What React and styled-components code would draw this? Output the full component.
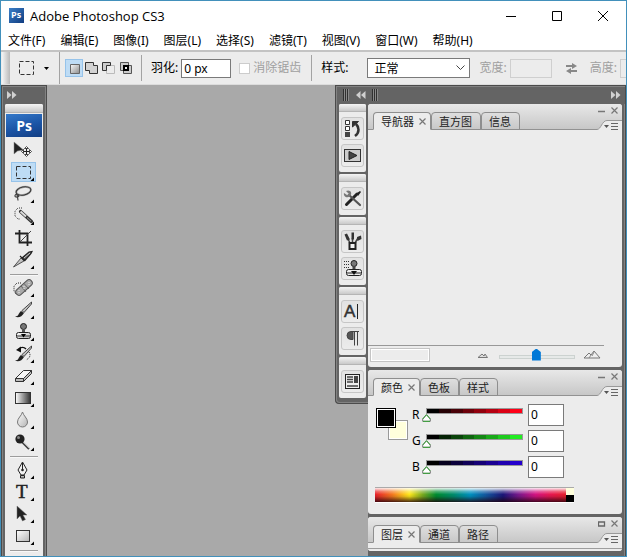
import React, { useState } from "react";
import styled, { createGlobalStyle, css } from "styled-components";

const Global = createGlobalStyle`
  * { box-sizing: border-box; }
  body { margin: 0; background: #fff; overflow: hidden; }
  button, input, select { font: inherit; margin: 0; }
  button { padding: 0; border: 0; background: none; color: inherit; }
`;

const uiFont = `"Noto Sans", "Noto Sans CJK SC", sans-serif`;

const Window = styled.div`
  display: flex;
  flex-direction: column;
  height: 100vh;
  overflow: hidden;
  border: 1px solid #4290bb;
  background: #fff;
  color: #000;
  font: 12px/16px ${uiFont};
  svg { display: block; flex: none; }
`;

/* ---------- title and menu ---------- */
const TitleBar = styled.header`
  display: flex;
  align-items: center;
  flex: none;
  height: 29px;
  padding: 0 0 0 8px;
`;
const Title = styled.h1`
  flex: 1;
  margin: 0 0 0 6px;
  font: 400 13px/18px "Open Sans", sans-serif;
  white-space: nowrap;
`;
const CaptionButton = styled.button`
  display: grid;
  place-items: center;
  width: 46px;
  height: 28px;
`;
const MenuBar = styled.nav`
  display: flex;
  flex: none;
  gap: 15px;
  height: 20px;
  padding: 2px 7px 0;
`;
const MenuItem = styled.button`
  white-space: nowrap;
  height: 18px;
  line-height: 18px;
`;

/* ---------- options bar ---------- */
const OptionsBar = styled.section`
  display: flex;
  align-items: center;
  flex: none;
  height: 35px;
  overflow: hidden;
  border-top: 2px solid #c3c3c3;
  border-bottom: 1px solid #dcdcdc;
  background: #ececec;
  white-space: nowrap;
`;
const OptionsGrip = styled.div`
  flex: none;
  width: 8px;
  height: 32px;
  margin-left: 1px;
  background: linear-gradient(90deg, #f4f4f4, #b9b9b9);
`;
const PresetButton = styled.button`
  display: flex;
  flex: none;
  align-items: center;
  gap: 9px;
  margin: 0 10px 0 9px;
`;
const Divider = styled.div`
  flex: none;
  width: 1px;
  height: ${(p) => p.$h || 26}px;
  background: #a3a3a3;
`;
const ModeGroup = styled.div`
  display: flex;
  flex: none;
  margin: 0 7px 0 5px;
`;
const ModeButton = styled.button`
  display: grid;
  place-items: center;
  width: ${(p) => (p.$on ? 18 : 17)}px;
  height: 18px;
  ${(p) => p.$on && css`background: #bedcf5; box-shadow: inset 0 0 0 1px #96c3ea;`}
`;
const FieldLabel = styled.label`
  flex: none;
  margin-left: 9px;
  color: ${(p) => (p.$dim ? "#a0a0a0" : "#000")};
`;
const TextField = styled.input`
  flex: none;
  width: ${(p) => p.$w}px;
  height: 19px;
  margin-left: 3px;
  padding: 0 2px;
  border: 1px solid #7a7a7a;
  border-radius: 0;
  background: #fff;
  outline: 0;
  &:disabled { border-color: #cfcfcf; background: #ececec; }
`;
const CheckLabel = styled.label`
  display: flex;
  flex: none;
  align-items: center;
  gap: 3px;
  margin: 0 10px 0 8px;
  color: #a0a0a0;
`;
const Check = styled.input`
  appearance: none;
  width: 11px;
  height: 11px;
  border: 1px solid #ccc;
  background: #fff;
`;
const SelectWrap = styled.div`
  display: grid;
  flex: none;
  width: 103px;
  margin-left: 19px;
  align-items: center;
  > * { grid-area: 1 / 1; }
  svg { justify-self: end; margin-right: 5px; pointer-events: none; }
`;
const Select = styled.select`
  appearance: none;
  height: 20px;
  padding: 0 20px 0 6px;
  border: 1px solid #7a7a7a;
  border-radius: 0;
  background: #fff;
  color: #000;
  line-height: 17px;
`;
const SwapButton = styled.button`
  flex: none;
  margin: 0 3px 0 13px;
`;

/* ---------- workspace ---------- */
const Workspace = styled.main`
  display: flex;
  flex: 1;
  min-height: 0;
  justify-content: space-between;
  background: #a9a9a9;
`;
const ToolDock = styled.aside`
  flex: none;
  width: 46px;
  padding: 0 3px;
  overflow: hidden;
  background: #646464;
  border: 1px solid #4b4b4b;
  border-bottom: 0;
  box-shadow: inset 1px 1px 0 #828282, inset -1px 0 0 #828282;
`;
const DockHeader = styled.div`
  display: flex;
  align-items: center;
  height: 18px;
  padding-left: 2px;
`;
const ToolPanel = styled.div`
  width: 38px;
  min-height: 460px;
  border-radius: 2px 2px 0 0;
  background: #ececec;
`;
const PanelGrip = styled.div`
  height: ${(p) => p.$h || 8}px;
  border-radius: 2px 2px 0 0;
  border-bottom: 1px solid #b5b5b5;
  background: linear-gradient(#f4f4f4, #c9c9c9);
`;
const PsBadge = styled.div`
  height: 23px;
  margin: 1px 1px 2px;
  background: linear-gradient(165deg, #3479ca, #1b54a5 55%, #123d82);
  color: #fff;
  text-align: center;
  font: 700 14px/23px "Open Sans", sans-serif;
`;
const ToolGroup = styled.div`
  display: flex;
  flex-direction: column;
  align-items: center;
  gap: 2px;
  padding: 1px 2px 1px 0;
`;
const ToolSeparator = styled.hr`
  width: 28px;
  height: 2px;
  margin: 3px auto 1px;
  border: 0;
  border-top: 1px solid #9d9d9d;
  background: #f8f8f8;
`;
const ToolButton = styled.button`
  width: 25px;
  height: 20px;
  ${(p) => p.$on && css`background: #bedcf5; box-shadow: inset 0 0 0 1px #96c3ea;`}
`;

const RightDock = styled.aside`
  display: grid;
  flex: none;
  grid-template-columns: 33px 258px;
  grid-template-rows: 19px 1fr;
`;
const RightHeader = styled.div`
  grid-column: 1 / -1;
  display: flex;
  align-items: center;
  gap: 6px;
  padding: 0 4px 0 7px;
  border: 1px solid #4b4b4b;
  border-bottom: 0;
  background: #646464;
  box-shadow: inset 1px 1px 0 #828282;
`;
const HeaderSpacer = styled.div`flex: 1;`;
const IconColumn = styled.div`
  align-self: start;
  display: flex;
  flex-direction: column;
  gap: 2px;
  padding: 0 2px 5px 3px;
  border: 1px solid #4b4b4b;
  border-width: 0 0 1px 1px;
  border-radius: 0 0 0 4px;
  background: #646464;
  box-shadow: inset 1px -1px 0 #828282;
`;
const IconGroup = styled.div`
  border-radius: 2px;
  background: #ececec;
  padding-bottom: 5px;
`;
const IconStack = styled.div`
  display: flex;
  flex-direction: column;
  align-items: center;
  gap: 4px;
  padding-top: 5px;
`;
const IconButton = styled.button`
  display: grid;
  place-items: center;
  width: 23px;
  height: 23px;
  border: 1px solid #c6c6c6;
  border-radius: 3px;
  background: linear-gradient(#e2e2e2, #ececec);
`;
const PanelColumn = styled.div`
  display: flex;
  flex-direction: column;
  gap: 3px;
  min-height: 0;
  padding: 0 4px 0 0;
  background: #646464;
  box-shadow: inset -1px 0 0 #4b4b4b, inset -2px 0 0 #828282;
`;
const Panel = styled.section`
  flex: none;
  border-radius: 3px;
  overflow: hidden;
  background: #ececec;
`;
const TabRow = styled.div`
  display: flex;
  align-items: flex-end;
  height: 26px;
  padding-left: 5px;
  background: linear-gradient(#e8e8e8, #c6c6c6);
  box-shadow: inset 0 -1px 0 #929292;
`;
const Tab = styled.div`
  display: flex;
  align-items: center;
  gap: 5px;
  height: 18px;
  padding: 0 ${(p) => (p.$on ? 4 : 8)}px 0 7px;
  border: 1px solid #8e8e8e;
  border-radius: 4px 4px 0 0;
  background: linear-gradient(#dedede, #c8c8c8);
  ${(p) => p.$on && css`background: #ececec; border-bottom-color: #ececec;`}
`;
const TabButton = styled.button`
  color: #222;
  font: 11px/15px "Noto Sans CJK SC", sans-serif;
  white-space: nowrap;
`;
const PanelControls = styled.div`
  display: flex;
  flex-direction: column;
  align-items: flex-end;
  align-self: stretch;
  justify-content: space-between;
  margin-left: auto;
`;
const PanelButtons = styled.div`
  display: flex;
  gap: 5px;
  padding: 3px 4px 0 0;
`;

const NavBody = styled.div`
  height: 237px;
  display: flex;
  flex-direction: column;
  justify-content: flex-end;
`;
const NavFooter = styled.div`
  display: flex;
  align-items: center;
  height: 22px;
  padding: 0 21px 3px 2px;
  background: linear-gradient(#989898, #989898) 0 0 / 236px 1px no-repeat;
`;
const ZoomField = styled.input`
  width: 60px;
  height: 14px;
  border: 1px solid #c4c4c4;
  border-radius: 0;
  background: #ececec;
  box-shadow: inset -1px -1px 0 #fff, inset 1px 1px 0 #fff;
`;
const ZoomRange = styled.input`
  appearance: none;
  width: 76px;
  height: 12px;
  margin: 0 8px 0 11px;
  background:
    linear-gradient(#e6e9e8, #e6e9e8) 1px 7px / 74px 2px no-repeat,
    linear-gradient(#ccd2d0, #ccd2d0) 0 6px / 76px 4px no-repeat;
  &::-webkit-slider-thumb {
    appearance: none;
    width: 9px;
    height: 12px;
    background: #0078d7;
    clip-path: polygon(0 30%, 50% 0, 100% 30%, 100% 100%, 0 100%);
  }
`;

const ColorBody = styled.div`
  display: grid;
  grid-template-columns: 32px 1fr;
  column-gap: 4px;
  padding: 8px 48px 11px 8px;
`;
const Swatches = styled.div`
  display: grid;
  width: 32px;
  height: 32px;
  margin-top: 4px;
`;
const Swatch = styled.button`
  grid-area: 1 / 1;
  width: 20px;
  height: 20px;
  border: 1px solid ${(p) => (p.$front ? "#000" : "#999")};
  background: ${(p) => p.$color};
  box-shadow: inset 0 0 0 1px #fff;
  ${(p) => (p.$front ? css`z-index: 1;` : css`place-self: end;`)}
`;
const Channels = styled.div`
  display: flex;
  flex-direction: column;
  gap: 4px;
`;
const Channel = styled.div`
  display: flex;
  align-items: center;
  height: 22px;
`;
const ChannelLabel = styled.label`
  width: 10px;
`;
const thumb = `url("data:image/svg+xml,%3Csvg xmlns='http://www.w3.org/2000/svg' width='9' height='8'%3E%3Cpath d='M4.5 .7L8.3 5v2.3H.7V5z' fill='white' stroke='%23777'/%3E%3Cpath d='M4.5 .7L8.3 5M4.5 .7L.7 5M1 7.3h7' stroke='%2330a030'/%3E%3C/svg%3E")`;
const ChannelRange = styled.input`
  appearance: none;
  width: 105px;
  height: 14px;
  background:
    ${(p) => p.$ramp} 5px 1px / 95px 4px no-repeat,
    linear-gradient(#999, #999) 4px 0 / 97px 6px no-repeat;
  &::-webkit-slider-runnable-track { height: 14px; }
  &::-webkit-slider-thumb {
    appearance: none;
    width: 9px;
    height: 8px;
    margin-top: 6px;
    background: ${thumb};
  }
`;
const ChannelValue = styled.input`
  width: 36px;
  height: 22px;
  margin-left: 1px;
  padding: 0 2px 2px;
  border: 1px solid #7a7a7a;
  border-radius: 0;
  background: #fff;
`;
const Spectrum = styled.div`
  grid-column: 1 / -1;
  display: grid;
  grid-template-columns: 1fr 8px;
  height: 16px;
  margin: 9px 0 0 -1px;
  border-top: 1px solid #aaa;
  border-bottom: 1px solid #fff;
`;
const Hues = styled.div`
  background:
    linear-gradient(rgba(255,255,255,.9), rgba(255,255,255,.3) 25%, transparent 45%, rgba(0,0,0,.1) 60%, rgba(30,0,10,.8)),
    linear-gradient(90deg, #e8202c, #f47820 9%, #ffe81c 18%, #7aaa20 25%, #008c30 32%, #008c6c 41%, #0090c0 50%, #1458a0 58%, #1c1678 67%, #78188c 75%, #d41482 84%, #e81850 92%, #e8202c);
`;
const SpectrumEnds = styled.div`
  background: linear-gradient(#ffffdc 50%, #000 50%);
`;
const LayersBody = styled.div`
  height: 8px;
  background: linear-gradient(#9d9d9d, #9d9d9d) 0 5px / 100% 1px no-repeat #ececec;
`;

/* ---------- drawings ---------- */
const Corner = () => <path d="M23 15.500v3.500h-3.500z" fill="#000" />;
const Shade = () => (
  <defs>
    <linearGradient id="metal" x1="0" y1="0" x2="1" y2="1">
      <stop offset="0" stopColor="#fafafa" /><stop offset="1" stopColor="#8c8c8c" />
    </linearGradient>
    <linearGradient id="drop" x1="0" y1="0" x2="1" y2="1">
      <stop offset="0" stopColor="#fff" /><stop offset="1" stopColor="#b4b4b4" />
    </linearGradient>
    <linearGradient id="fade"><stop offset="0" stopColor="#fff" /><stop offset="1" stopColor="#333" /></linearGradient>
    <linearGradient id="badge" x1="0" y1="0" x2="1" y2="1">
      <stop offset="0" stopColor="#3c80c8" /><stop offset="1" stopColor="#103c80" />
    </linearGradient>
  </defs>
);

const toolArt = {
  move: <>
    <path d="M3 2v12l3.500-3 6-1z" fill="#222" stroke="#888" strokeWidth=".5" />
    <path d="M15.500 7v9M11 11.500h9" stroke="#222" />
    <path d="M15.500 6.500l-2 2h4zM15.500 16.500l-2-2h4zM10.500 11.500l2-2v4zM20.500 11.500l-2-2v4z" fill="#fff" stroke="#222" strokeWidth=".8" />
  </>,
  marquee: <rect x="5.500" y="4.500" width="14" height="12" fill="none" stroke="#333" strokeDasharray="4 2" />,
  lasso: <>
    <ellipse cx="12.500" cy="7" rx="7.500" ry="4" transform="rotate(-12 12.500 7)" fill="none" stroke="#aaa" strokeWidth="2.200" />
    <ellipse cx="12.500" cy="7" rx="7.500" ry="4" transform="rotate(-12 12.500 7)" fill="none" stroke="#333" />
    <path d="M7 10.500c-3-1-4 2-2 2.500s4-1 2-2 0 3 0 5.500" fill="none" stroke="#444" strokeWidth="1.200" />
  </>,
  quick: <>
    <path d="M11 2H7L4 5v5l3 3h2" fill="none" stroke="#333" strokeDasharray="1 1" />
    <path d="M9.500 5.500l11 10" stroke="#333" strokeWidth="3.200" strokeLinecap="round" />
    <path d="M9.500 5.500L15 10.500" stroke="#ddd" strokeWidth="2" />
    <path d="M16 11.500l4 3.700" stroke="#999" />
  </>,
  crop: <>
    <path d="M8.500 2v12.500H21M4 5.500h12.500V18" fill="none" stroke="#222" strokeWidth="1.800" />
    <path d="M9 14L20 3" stroke="#444" />
  </>,
  slice: <>
    <path d="M2.500 17l7.500-9 3 3z" fill="url(#metal)" stroke="#333" strokeWidth=".8" />
    <path d="M9 6l5 5M11 8l7-6 3-.5-1 2-6 7z" fill="#555" stroke="#222" strokeWidth="1.200" />
    <path d="M13 8l6-5" stroke="#ccc" />
  </>,
  heal: <>
    <path d="M10 5H6L3 8v5l2 3h4" fill="none" stroke="#222" strokeDasharray="1 1" />
    <path d="M8 14L18 5" stroke="#555" strokeWidth="7.500" strokeLinecap="round" />
    <path d="M8 14L18 5" stroke="#aaa" strokeWidth="5.500" strokeLinecap="round" />
    <path d="M10 8l5 6M13 5.500l5 5.500" stroke="#555" strokeWidth=".8" />
    <path d="M8 12v3M13 8v3M18 4v3" stroke="#eee" strokeDasharray="1 1" />
  </>,
  brush: <>
    <path d="M20.500 2L11 10.500l2 2 7.500-8.500z" fill="url(#metal)" stroke="#222" strokeWidth=".8" />
    <path d="M4 16.500c4 0 3-3 6-5.500l3 2c-2 4-6 5-9 3.500z" fill="#222" />
  </>,
  stamp: <>
    <circle cx="12.500" cy="4.500" r="3" fill="#777" stroke="#222" />
    <path d="M11 8h3v3h-3z" fill="#555" />
    <rect x="5.500" y="10.500" width="14" height="6" rx="2" fill="url(#drop)" stroke="#222" />
    <path d="M6 14h13" stroke="#333" /><path d="M10 12h5l-2.500 3.500z" fill="#000" />
  </>,
  history: <>
    <path d="M20.500 2L11 10.500l2 2 7.500-8.500z" fill="url(#metal)" stroke="#222" strokeWidth=".8" />
    <path d="M4 16.500c4 0 3-3 6-5.500l3 2c-2 4-6 5-9 3.500z" fill="#222" />
    <path d="M8 5c2-2 5-2 7 0" fill="none" stroke="#111" strokeWidth="1.500" /><path d="M5 6l5-3.500v6z" fill="#111" />
    <path d="M18 8c2 3 1 6-3 8" fill="none" stroke="#222" strokeDasharray="1 1" />
  </>,
  eraser: <>
    <path d="M4.500 12.500l8-8h8l-8 8z" fill="#f5f5f5" stroke="#333" />
    <path d="M4.500 12.500v3h8v-3zM12.500 15.500l8-8v-3l-8 8z" fill="#bbb" stroke="#333" />
  </>,
  gradient: <rect x="4.500" y="4.500" width="15" height="11" fill="url(#fade)" stroke="#333" />,
  blur: <path d="M11.500 2c1 4 5 6 5 10a5 5 0 01-10 0c0-4 4-6 5-10z" fill="url(#drop)" stroke="#777" />,
  dodge: <>
    <path d="M11 10l7 7" stroke="#444" strokeWidth="2" /><path d="M12 10l6 6" stroke="#bbb" />
    <circle cx="9" cy="7" r="4.600" fill="#222" /><circle cx="7.500" cy="5.500" r="1.500" fill="#888" />
  </>,
  pen: <>
    <path d="M11.500 2l4.500 8-3 5h-3l-3-5z" fill="#f2f2f2" stroke="#222" />
    <path d="M11.500 3v6" stroke="#222" /><circle cx="11.500" cy="10" r="1.300" fill="#222" />
    <path d="M9.500 15.500h4v2.500h-4z" fill="#bbb" stroke="#222" />
  </>,
  type: <text x="5" y="16" fontFamily="Liberation Serif, serif" fontSize="19" stroke="#222" strokeWidth=".5" fill="#222">T</text>,
  select: <path d="M6 2v13l3-3 2.500 5 3-1.500-2.500-4.500h4z" fill="#222" stroke="#777" strokeWidth=".5" />,
  shape: <rect x="5.500" y="4.500" width="13" height="11" fill="url(#drop)" stroke="#333" />,
  notes: <path d="M5 4h14v8H5z" fill="#aaa" stroke="#555" />,
};

const toolGroups = [
  ["move", "marquee", "lasso", "quick", "crop", "slice"],
  ["heal", "brush", "stamp", "history", "eraser", "gradient", "blur", "dodge"],
  ["pen", "type", "select", "shape"],
  ["notes"],
];

const dockArt = {
  history: <>
    <path d="M2.500 1.500h4v4h-4zM2.500 7.500h4v4h-4z" fill="#fff" stroke="#333" /><path d="M2 13h5v5H2z" fill="#444" />
    <path d="M12 17c5-4 4-9 1-12" fill="none" stroke="#333" strokeWidth="2.500" /><path d="M9.500 8V2.500h6z" fill="#333" stroke="#333" />
  </>,
  actions: <>
    <rect x="1.500" y="3.500" width="16" height="12" fill="#ccc" stroke="#333" />
    <path d="M6 5.500v8l8-4z" fill="#444" stroke="#222" />
  </>,
  tools: <>
    <path d="M3.500 15.500L14 5" stroke="#222" strokeWidth="3" strokeLinecap="round" /><path d="M14 4l3-2 1 1-3 4z" fill="#222" />
    <path d="M6 6l11 10" stroke="#555" strokeWidth="2.200" strokeLinecap="round" />
    <path d="M3 2c4-2 7 2 4 5S0 7 1 4l3 2 2-1z" fill="#777" />
  </>,
  brushes: <>
    <path d="M7 11L4 5M9.500 11V6M12 11l3-5" stroke="#444" strokeWidth="1.500" />
    <path d="M1.500 2.500l2.500-1 3 6-3 1zM8.500 .5h2.500v7H8.500zM14 5l4-1.500 .5 3.500-4 2z" fill="#333" />
    <path d="M6.500 11h6v6h-6z" fill="#f4f4f4" stroke="#222" strokeWidth="2" />
  </>,
  clones: <>
    <path d="M1 2.500h6M1 5.500h6M1 8.500h5" stroke="#333" strokeDasharray="1 1" />
    <circle cx="11" cy="4.500" r="3" fill="#777" stroke="#222" /><path d="M9.500 7h3v4h-3z" fill="#444" />
    <rect x="3.500" y="10.500" width="15" height="6" rx="2" fill="#eee" stroke="#222" />
    <path d="M4 14h14" stroke="#222" /><path d="M8 12h6l-3 4z" fill="#111" />
  </>,
  character: <>
    <text x="1" y="15" fontFamily="Liberation Sans, sans-serif" fontSize="17" fill="#333" stroke="#333" strokeWidth=".5">A</text>
    <path d="M14.500 2v15" stroke="#222" />
  </>,
  paragraph: <>
    <path d="M10 2.500H8a4 4 0 000 8h2z" fill="#555" stroke="#444" />
    <path d="M9 2.500h7M11.500 3v13.500M14.500 3v13.500" fill="none" stroke="#444" />
  </>,
  comps: <>
    <rect x="2.500" y="2.500" width="14" height="14" fill="#eee" stroke="#222" />
    <path d="M4 5h6M4 7.500h6M4 10h6M4 14h11" stroke="#444" strokeWidth="1.500" /><path d="M11 4h4v7h-4z" fill="#444" />
  </>,
};
const dockGroups = [["history", "actions"], ["tools"], ["brushes", "clones"], ["character", "paragraph"], ["comps"]];

const modes = {
  new: <path d="M4.500 4.500h9v9h-9z" fill="url(#metal)" stroke="#666" />,
  add: <path d="M1.500 2.500h8v3h4v8h-8v-3h-4z" fill="#d2d2d2" stroke="#333" />,
  subtract: <><path d="M5.500 5.500h8v8h-8z" fill="none" stroke="#bbb" /><path d="M1.500 2.500h8v3h-4v5h-4z" fill="#ccc" stroke="#333" /></>,
  intersect: <><path d="M2.500 2.500h8v8h-8zM5.500 5.500h8v8h-8z" fill="#ccc" stroke="#555" /><path d="M6 6h4v4H6z" fill="#eee" stroke="#000" strokeWidth="2" /></>,
};

const Chevrons = ({ left }) => (
  <svg width="10" height="8"><path d={left ? "M4.500 0v8L0 4zM9.500 0v8L5 4z" : "M0 0v8l4.500-4zM5 0v8l4.500-4z"} fill="#d0d0d0" /></svg>
);
const Ridges = () => (
  <svg width="7" height="12"><path d="M.5 0v12M2.500 0v12M4.500 0v12" stroke="#303030" /><path d="M1.500 0v12M3.500 0v12M5.500 0v12" stroke="#888" /></svg>
);
const Cross = () => <svg width="7" height="7"><path d="M.5 .5l6 6M6.500 .5l-6 6" stroke="#777" strokeWidth="1.200" /></svg>;

function Tabs({ names, collapsed }) {
  return (
    <TabRow>
      {names.map((name, i) => (
        <Tab key={name} $on={i === 0}>
          <TabButton>{name}</TabButton>
          {i === 0 && <button aria-label="关闭"><Cross /></button>}
        </Tab>
      ))}
      <PanelControls>
        <PanelButtons>
          <button aria-label="最小化">
            <svg width="8" height="7">{collapsed ? <path d="M.5 2h6v4h-6zM0 2h7" fill="none" stroke="#666" strokeWidth="1.300" /> : <path d="M0 4.500h7" stroke="#777" strokeWidth="1.500" />}</svg>
          </button>
          <button aria-label="关闭面板"><Cross /></button>
        </PanelButtons>
        <button aria-label="面板菜单">
          <svg width="25" height="10"><path d="M0 9.500C4 9.500 5 .5 10 .5h15V10H0z" fill="#ececec" /><path d="M0 9.500C4 9.500 5 .5 10 .5h15" fill="none" stroke="#999" /><path d="M7 5h5L9.500 8z" fill="#555" /><path d="M14 3.500h7M14 6.500h7M14 9.500h7" stroke="#666" /></svg>
        </button>
      </PanelControls>
    </TabRow>
  );
}

const steps = (r, g, b) => {
  const n = 8;
  const stops = Array.from({ length: n }, (_, i) => {
    const k = i / (n - 1);
    return `rgb(${r * k} ${g * k} ${b * k}) ${(i * 100) / n}% ${((i + 1) * 100) / n}%`;
  });
  return `linear-gradient(90deg, ${stops.join(", ")})`;
};
const channels = [
  { name: "R", ramp: steps(255, 0, 24) },
  { name: "G", ramp: steps(34, 236, 34) },
  { name: "B", ramp: steps(36, 0, 205) },
];
const menus = ["文件(F)", "编辑(E)", "图像(I)", "图层(L)", "选择(S)", "滤镜(T)", "视图(V)", "窗口(W)", "帮助(H)"];

export default function App() {
  const [tool, setTool] = useState("marquee");
  const [mode, setMode] = useState("new");
  const [feather, setFeather] = useState("0 px");
  const [values, setValues] = useState({ R: 0, G: 0, B: 0 });
  const setChannel = (name) => (e) => setValues({ ...values, [name]: e.target.value });

  return (
    <Window>
      <Global />
      <TitleBar>
        <svg width="15" height="15">
          <Shade />
          <path d="M0 0h15v15H0z" fill="url(#badge)" />
          <text x="2" y="10" fontFamily="Open Sans, sans-serif" fontWeight="700" fontSize="9" fill="#fff">Ps</text>
        </svg>
        <Title>Adobe Photoshop CS3</Title>
        <CaptionButton aria-label="最小化"><svg width="10" height="10"><path d="M0 5.500h10" stroke="#000" /></svg></CaptionButton>
        <CaptionButton aria-label="最大化"><svg width="10" height="10"><path d="M.5 .5h9v9h-9z" fill="none" stroke="#000" /></svg></CaptionButton>
        <CaptionButton aria-label="关闭"><svg width="10" height="10"><path d="M0 0l10 10M10 0L0 10" stroke="#000" /></svg></CaptionButton>
      </TitleBar>
      <MenuBar>{menus.map((m) => <MenuItem key={m}>{m}</MenuItem>)}</MenuBar>

      <OptionsBar>
        <OptionsGrip />
        <PresetButton aria-label="工具预设">
          <svg width="16" height="16"><rect x=".5" y="1.500" width="14" height="13" fill="none" stroke="#333" strokeDasharray="4 2" /></svg>
          <svg width="5" height="3"><path d="M0 0h5L2.500 3z" /></svg>
        </PresetButton>
        <Divider $h={32} />
        <ModeGroup>
          {Object.keys(modes).map((m) => (
            <ModeButton key={m} aria-label={m} $on={mode === m} onClick={() => setMode(m)}>
              <svg width="16" height="16">{modes[m]}</svg>
            </ModeButton>
          ))}
        </ModeGroup>
        <Divider />
        <FieldLabel htmlFor="feather">羽化:</FieldLabel>
        <TextField id="feather" $w={50} value={feather} onChange={(e) => setFeather(e.target.value)} />
        <CheckLabel><Check type="checkbox" disabled />消除锯齿</CheckLabel>
        <Divider />
        <FieldLabel htmlFor="style">样式:</FieldLabel>
        <SelectWrap>
          <Select id="style"><option>正常</option></Select>
          <svg width="9" height="6"><path d="M.5 .5l4 4 4-4" fill="none" stroke="#444" /></svg>
        </SelectWrap>
        <FieldLabel htmlFor="width" $dim>宽度:</FieldLabel>
        <TextField id="width" $w={42} disabled />
        <SwapButton aria-label="交换">
          <svg width="13" height="11"><path d="M1 3h7M5 8h7" stroke="#888" strokeWidth="1.800" /><path d="M7 0l5 3-5 3zM6 5L1 8l5 3z" fill="#888" /></svg>
        </SwapButton>
        <FieldLabel htmlFor="height" $dim>高度:</FieldLabel>
        <TextField id="height" $w={42} disabled />
      </OptionsBar>

      <Workspace>
        <ToolDock>
          <DockHeader><Chevrons /></DockHeader>
          <ToolPanel>
            <PanelGrip $h={9} />
            <PsBadge>Ps</PsBadge>
            {toolGroups.map((group, i) => (
              <React.Fragment key={group[0]}>
                {i > 0 && <ToolSeparator />}
                <ToolGroup>
                  {group.map((id) => (
                    <ToolButton key={id} aria-label={id} $on={tool === id} onClick={() => setTool(id)}>
                      <svg width="25" height="20">{toolArt[id]}{id !== "move" && id !== "crop" && <Corner />}</svg>
                    </ToolButton>
                  ))}
                </ToolGroup>
              </React.Fragment>
            ))}
          </ToolPanel>
        </ToolDock>

        <RightDock>
          <RightHeader><Ridges /><Chevrons left /><Ridges /><HeaderSpacer /><Chevrons /></RightHeader>
          <IconColumn>
            {dockGroups.map((group) => (
              <IconGroup key={group[0]}>
                <PanelGrip />
                <IconStack>
                  {group.map((id) => (
                    <IconButton key={id} aria-label={id}><svg width="19" height="19">{dockArt[id]}</svg></IconButton>
                  ))}
                </IconStack>
              </IconGroup>
            ))}
          </IconColumn>
          <PanelColumn>
            <Panel>
              <Tabs names={["导航器", "直方图", "信息"]} />
              <NavBody>
                <NavFooter>
                  <ZoomField aria-label="缩放" />
                  <HeaderSpacer />
                  <svg width="10" height="7"><path d="M0 6.500L4 3l2 2 1-2 2.500 3.500z" fill="#ddd" stroke="#777" /></svg>
                  <ZoomRange type="range" aria-label="缩放滑块" defaultValue="49" />
                  <svg width="18" height="9"><path d="M1 8l5-5 2 2 3-4 6 7z" fill="#eee" stroke="#777" /><path d="M8 5L6 8M11 2L9 6" stroke="#888" /></svg>
                </NavFooter>
              </NavBody>
            </Panel>
            <Panel>
              <Tabs names={["颜色", "色板", "样式"]} />
              <ColorBody>
                <Swatches>
                  <Swatch $front $color="#000" aria-label="前景色" />
                  <Swatch $color="#ffffdc" aria-label="背景色" />
                </Swatches>
                <Channels>
                  {channels.map(({ name, ramp }) => (
                    <Channel key={name}>
                      <ChannelLabel htmlFor={name}>{name}</ChannelLabel>
                      <ChannelRange id={name} type="range" max="255" value={values[name]} onChange={setChannel(name)} $ramp={ramp} />
                      <ChannelValue aria-label={name} value={values[name]} onChange={setChannel(name)} />
                    </Channel>
                  ))}
                </Channels>
                <Spectrum><Hues /><SpectrumEnds /></Spectrum>
              </ColorBody>
            </Panel>
            <Panel>
              <Tabs names={["图层", "通道", "路径"]} collapsed />
              <LayersBody />
            </Panel>
          </PanelColumn>
        </RightDock>
      </Workspace>
    </Window>
  );
}
